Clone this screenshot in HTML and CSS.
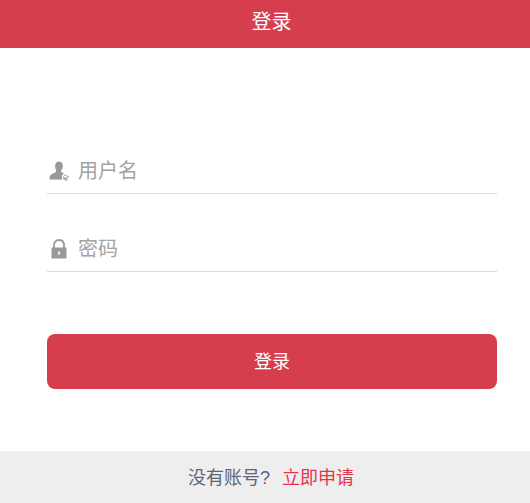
FILE: index.html
```html
<!DOCTYPE html>
<html lang="zh-CN">
<head>
    <meta charset="UTF-8">
    <meta name="viewport" content="width=device-width, initial-scale=1.0">
    <title>登录</title>
    <link rel="stylesheet" href="styles.css">
</head>
<body>
    <header class="header">登录</header>

    <main class="main-content">
        <form class="login-form">
            <div class="form-group">
                <svg class="form-icon" width="20" height="20" viewBox="0 0 20 20">
                    <path fill="#999" d="M10 0.500c2.400 0 3.900 1.900 3.900 4.400 0 1.900-0.800 3.400-1.700 4.500v1.600c0.900 0.500 2 1 3 1.400-1.600 0.500-2.600 2-2.400 3.800 0 0.900 0.400 1.700 1 2.300H1.500c-0.600 0-1-0.400-1-1 0-2.900 1.500-4.200 3.500-5 1-0.400 2-0.900 3-1.500V9.400C6.900 8.300 6.100 6.800 6.100 4.900 6.100 2.400 7.600 0.500 10 0.500z"/>
                    <path fill="none" stroke="#999" stroke-width="1.200" d="M14.800 16.300l1.800 1.800 3-3.300"/>
                    <path fill="none" stroke="#999" stroke-width="0.800" d="M19.200 17.800a2.600 2.600 0 1 1-1.200-3.500"/>
                </svg>
                <input class="form-input" type="text" placeholder="用户名">
            </div>
            <div class="form-group">
                <svg class="form-icon" width="20" height="20" viewBox="0 0 20 20">
                    <path fill="none" stroke="#999" stroke-width="1.800" d="M5 9V6.500C5 3 7.200 1 10 1s5 2 5 5.500V9"/>
                    <path fill="#999" fill-rule="evenodd" d="M3 8.500h14c0.300 0 0.500 0.200 0.500 0.500v9.500c0 0.600-0.400 1-1 1h-13c-0.600 0-1-0.400-1-1V9c0-0.300 0.200-0.500 0.500-0.500zM10 12.500c-0.700 0-1.200 0.500-1.200 1.100 0 0.400 0.200 0.800 0.600 1v1.400h1.200v-1.400c0.400-0.200 0.600-0.600 0.600-1 0-0.600-0.500-1.100-1.200-1.100z"/>
                </svg>
                <input class="form-input" type="password" placeholder="密码">
            </div>
            <button class="btn-primary" type="button">登录</button>
        </form>
    </main>

    <footer class="footer">
        <span class="footer-text">没有账号?</span>
        <a class="footer-link" href="#">立即申请</a>
    </footer>
</body>
</html>
```

FILE: styles.css
```css
* {
    margin: 0;
    padding: 0;
    box-sizing: border-box;
}

body {
    font-family: "Liberation Sans", "Noto Sans CJK SC", sans-serif;
    background: white;
    min-height: 100vh;
    display: flex;
    flex-direction: column;
}

.header {
    height: 48px;
    line-height: 44px;
    padding-left: 13px;
    background: #d73e4d;
    color: white;
    font-size: 20px;
    text-align: center;
}

.main-content {
    flex: 1;
    padding: 0 33px 0 47px;
}

.login-form {
    padding-top: 93px;
}

.form-group {
    height: 53px;
    margin-bottom: 25px;
    padding-top: 8px;
    padding-left: 2px;
    display: flex;
    align-items: center;
    gap: 9px;
    border-bottom: 1px solid #d9d9d9;
}

.form-icon {
    flex-shrink: 0;
}

.form-input {
    flex: 1;
    min-width: 0;
    border: none;
    outline: none;
    background: transparent;
    font-family: inherit;
    font-size: 20px;
    color: #333;
}

.form-input::placeholder {
    color: #a3a3a3;
    opacity: 1;
}

.btn-primary {
    display: block;
    width: 100%;
    height: 55px;
    margin-top: 62px;
    padding-bottom: 4px;
    background: #d73e4d;
    color: white;
    border: none;
    border-radius: 8px;
    font-family: inherit;
    font-size: 18px;
    cursor: pointer;
}

.footer {
    height: 52px;
    padding-left: 12px;
    padding-bottom: 3px;
    background: #eeeeee;
    display: flex;
    justify-content: center;
    align-items: center;
    gap: 12px;
    font-size: 18px;
}

.footer-text {
    color: #5c6478;
}

.footer-link {
    color: #e5334b;
    text-decoration: none;
}
```
